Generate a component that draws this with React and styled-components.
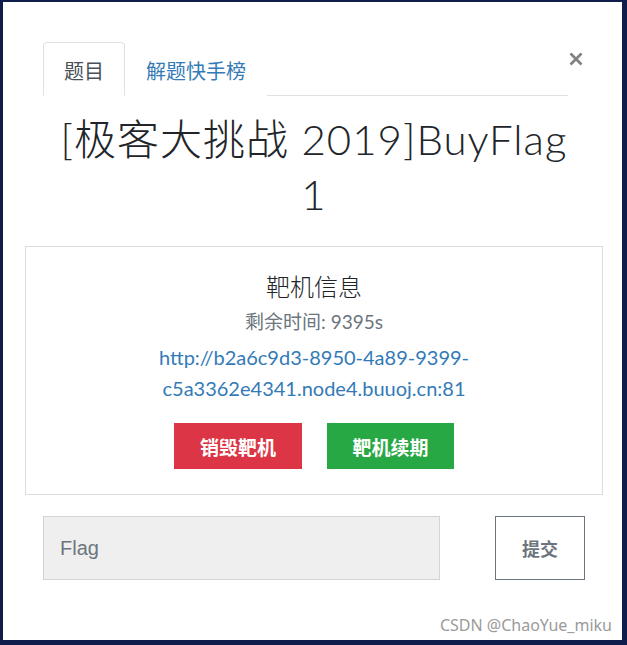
import React, { useState } from "react";
import styled, { createGlobalStyle } from "styled-components";

const GlobalStyle = createGlobalStyle`
  html, body {
    margin: 0;
    padding: 0;
    background: #0f1d4c;
  }
  body {
    font-family: Lato, "Noto Sans CJK SC", sans-serif;
    color: #212529;
  }
  * {
    box-sizing: border-box;
  }
`;

const Backdrop = styled.div`
  width: 627px;
  height: 645px;
  padding: 2px 5px 5px 3px;
  display: flex;
  background: #0f1d4c;
`;

const Modal = styled.div`
  flex: 1;
  background: #fff;
  display: flex;
  flex-direction: column;
  padding-top: 40px;
`;

const Header = styled.div`
  display: flex;
  align-items: flex-start;
  padding: 0 39px 0 40px;
`;

const TabList = styled.div`
  flex: 1;
  display: flex;
  border-bottom: 1px solid #dee2e6;
  margin-right: 1px;
`;

const Tab = styled.button`
  font-family: Lato, "Noto Sans CJK SC", sans-serif;
  font-size: 20px;
  line-height: 28px;
  padding: 14px 20px 10px;
  margin-bottom: -1px;
  border: 1px solid ${(p) => (p.$active ? "#dee2e6" : "transparent")};
  border-bottom-color: ${(p) => (p.$active ? "#fff" : "transparent")};
  border-radius: 4px 4px 0 0;
  background: #fff;
  color: ${(p) => (p.$active ? "#495057" : "#337ab7")};
  cursor: pointer;
`;

const Close = styled.button`
  width: 14px;
  height: 14px;
  margin-top: 10px;
  padding: 0;
  border: none;
  background: none;
  display: flex;
  cursor: pointer;
`;

const Body = styled.div`
  flex: 1;
  display: flex;
  flex-direction: column;
  padding: 0 19px 0 22px;
`;

const Title = styled.h1`
  margin: 16px auto 24px;
  max-width: 530px;
  font-family: Lato, "Noto Sans CJK SC", sans-serif;
  font-weight: 300;
  font-size: 42px;
  line-height: 55px;
  letter-spacing: 1px;
  text-align: center;
  color: #212529;
`;

const Card = styled.div`
  border: 1px solid #dcdcdc;
  padding: 25px 20px 25px;
  display: flex;
  flex-direction: column;
  align-items: center;
  text-align: center;
`;

const CardTitle = styled.h3`
  margin: 0;
  font-size: 24px;
  font-weight: 300;
  line-height: 29px;
  color: #212529;
`;

const Remain = styled.p`
  margin: 7px 0 0;
  font-size: 19px;
  line-height: 27px;
  color: #6c757d;
`;

const Link = styled.a`
  display: block;
  margin-top: 7px;
  max-width: 360px;
  font-size: 20px;
  line-height: 31px;
  color: #337ab7;
  text-decoration: none;
`;

const Actions = styled.div`
  display: flex;
  gap: 25px;
  margin-top: 19px;
`;

const ActionButton = styled.button`
  width: ${(p) => p.$w}px;
  height: 46px;
  border: none;
  border-radius: 0;
  background: ${(p) => p.$bg};
  color: #fff;
  font-family: Lato, "Noto Sans CJK SC", sans-serif;
  font-weight: 700;
  font-size: 19px;
  cursor: pointer;
`;

const SubmitRow = styled.form`
  display: flex;
  align-items: center;
  justify-content: space-between;
  margin-top: 21px;
  padding: 0 18px 0 18px;
`;

const FlagInput = styled.input`
  width: 397px;
  height: 64px;
  padding: 0 16px;
  background: #efefef;
  border: 1px solid #ced4da;
  border-radius: 0;
  font-family: "Liberation Sans", Arial, sans-serif;
  font-size: 20px;
  color: #495057;
  outline: none;

  &::placeholder {
    color: #6c757d;
  }
`;

const SubmitButton = styled.button`
  width: 90px;
  height: 64px;
  background: #fff;
  border: 1px solid #6c757d;
  border-radius: 0;
  color: #6c757d;
  font-family: Lato, "Noto Sans CJK SC", sans-serif;
  font-weight: 700;
  font-size: 18px;
  cursor: pointer;
`;

const Watermark = styled.div`
  margin: auto -9px 0 0;
  padding-bottom: 5px;
  text-align: right;
  font-family: "Noto Sans", "Noto Sans CJK SC", sans-serif;
  font-size: 16px;
  line-height: 20px;
  color: #9a9a9a;
`;

function App() {
  const [tab, setTab] = useState(0);

  return (
    <Backdrop>
      <GlobalStyle />
      <Modal>
        <Header>
          <TabList>
            <Tab $active={tab === 0} onClick={() => setTab(0)}>题目</Tab>
            <Tab $active={tab === 1} onClick={() => setTab(1)}>解题快手榜</Tab>
          </TabList>
          <Close aria-label="close">
            <svg width="14" height="14" viewBox="0 0 14 14">
              <path d="M1.5 1.5 L12.5 12.5 M12.5 1.5 L1.5 12.5" stroke="#808080" strokeWidth="2.6" />
            </svg>
          </Close>
        </Header>
        <Body>
          <Title>[极客大挑战 2019]BuyFlag 1</Title>
          <Card>
            <CardTitle>靶机信息</CardTitle>
            <Remain>剩余时间: 9395s</Remain>
            <Link href="#">http://b2a6c9d3-8950-4a89-9399-c5a3362e4341.node4.buuoj.cn:81</Link>
            <Actions>
              <ActionButton $bg="#dc3545" $w={128}>销毁靶机</ActionButton>
              <ActionButton $bg="#28a745" $w={127}>靶机续期</ActionButton>
            </Actions>
          </Card>
          <SubmitRow onSubmit={(e) => e.preventDefault()}>
            <FlagInput type="text" placeholder="Flag" />
            <SubmitButton type="submit">提交</SubmitButton>
          </SubmitRow>
          <Watermark>CSDN @ChaoYue_miku</Watermark>
        </Body>
      </Modal>
    </Backdrop>
  );
}

export default App;
